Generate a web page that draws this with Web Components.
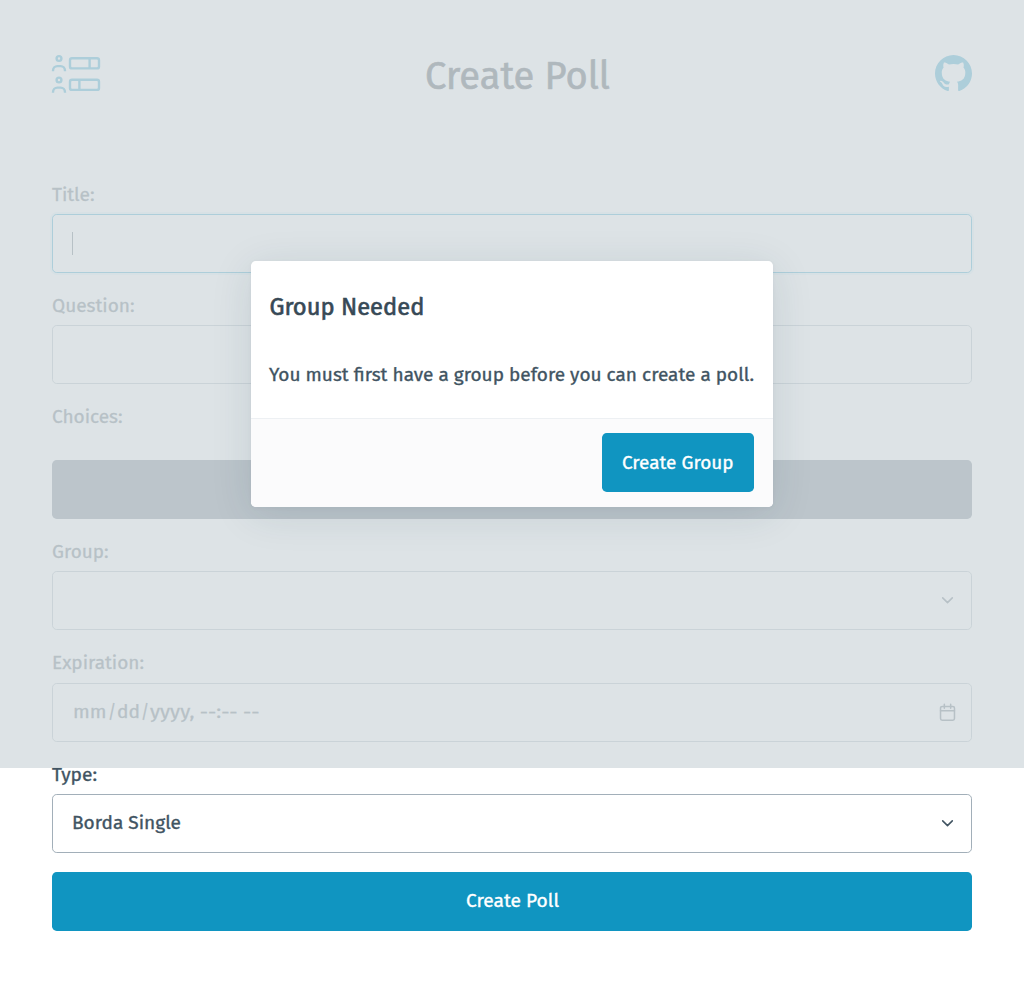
<!DOCTYPE html>
<html lang="en">
<head>
<meta charset="utf-8">
<title>Create Poll</title>
<style>
  html, body { margin: 0; background: #fff; }
  body { font: 400 19px/28.5px "Fira Sans", "Noto Sans", sans-serif; color: #415462; height: 988px; overflow: hidden; position: relative; -webkit-text-stroke: .35px currentColor; }
</style>
</head>
<body>
<poll-page></poll-page>
<script>
const define = (name, html, setup) => customElements.define(name, class extends HTMLElement {
  connectedCallback() {
    if (this.shadowRoot) return;
    const t = document.createElement('template');
    t.innerHTML = html;
    this.attachShadow({ mode: 'open' }).append(t.content.cloneNode(true));
    if (setup) setup(this, this.shadowRoot);
  }
});

/* A single line of text fitted to a fixed measure. */
define('fit-text', `<style>
  :host { display: inline-block; white-space: pre; -webkit-text-stroke-color: currentColor; }
  span { display: inline-block; transform-origin: 0 50%; }
</style><span><slot></slot></span>`, (el, root) => {
  const w = parseFloat(el.getAttribute('measure'));
  const span = root.querySelector('span');
  el.style.width = w + 'px';
  span.style.transform = `scaleX(${w / span.getBoundingClientRect().width})`;
});

define('poll-logo', `<style>:host{display:block;width:50px;height:40px;color:#1095c1}svg{display:block}</style>
<svg width="50" height="40" viewBox="51 54 50 40" fill="none" stroke="currentColor" stroke-width="2.4">
  <circle cx="59" cy="58.5" r="2.4"/><path d="M53 71.3v-.6c0-2.8 2-4.6 4.4-4.6h3.2c2.4 0 4.4 1.8 4.4 4.6v.6"/>
  <rect x="70" y="58.3" width="29" height="10.1" rx="2"/><path d="M89.6 58.3v10.1"/>
  <circle cx="59" cy="80" r="2.4"/><path d="M53 92.8v-.6c0-2.8 2-4.6 4.4-4.6h3.2c2.4 0 4.4 1.8 4.4 4.6v.6"/>
  <rect x="70" y="79.8" width="29" height="10.1" rx="2"/><path d="M79.4 79.8v10.1"/>
</svg>`);

define('github-mark', `<style>:host{display:block;color:#1095c1}svg{display:block}</style>
<svg width="37" height="37" viewBox="0 0 16 16" fill="currentColor"><path d="M8 0C3.58 0 0 3.58 0 8c0 3.54 2.29 6.53 5.47 7.59.4.07.55-.17.55-.38 0-.19-.01-.82-.01-1.49-2.01.37-2.53-.49-2.69-.94-.09-.23-.48-.94-.82-1.13-.28-.15-.68-.52-.01-.53.63-.01 1.08.58 1.23.82.72 1.21 1.87.87 2.33.66.07-.52.28-.87.51-1.07-1.78-.2-3.64-.89-3.64-3.95 0-.87.31-1.59.82-2.15-.08-.2-.36-1.02.08-2.12 0 0 .67-.21 2.2.82.64-.18 1.32-.27 2-.27s1.36.09 2 .27c1.53-1.04 2.2-.82 2.2-.82.44 1.1.16 1.92.08 2.12.51.56.82 1.27.82 2.15 0 3.07-1.87 3.75-3.65 3.95.29.25.54.73.54 1.48 0 1.07-.01 1.93-.01 2.2 0 .21.15.46.55.38A8.01 8.01 0 0 0 16 8c0-4.42-3.58-8-8-8z"/></svg>`);

define('page-header', `<style>
  :host { display: flex; justify-content: space-between; align-items: flex-start; height: 126.75px; padding: 54px 0 0; margin-left: -1px; }
  h1 { margin: -2px 0 0; padding-right: 2px; font-size: 38px; line-height: 48px; font-weight: 400; -webkit-text-stroke-width: .7px; color: #1b2832; }
  github-mark { margin-top: 1px; }
</style><poll-logo></poll-logo><h1><fit-text measure="185">Create Poll</fit-text></h1><github-mark></github-mark>`);

define('form-field', `<style>
  :host { display: block; height: 111.25px; }
  .label { height: 33.25px; }
  .box { box-sizing: border-box; height: 59px; border: 1px solid #a2afb9; border-radius: 4.75px; background: #fff; display: flex; align-items: center; justify-content: space-between; padding: 0 14px 0 19px; }
  :host([focused]) .box { border-color: #1095c1; box-shadow: 0 0 0 2px rgba(16,149,193,.125); }
  .caret { width: 1px; height: 23px; background: #415462; }
  .spacer { flex: 1; }
</style><div class="label"><slot name="label"></slot></div><div class="box"><slot></slot><i class="spacer"></i></div>`, (el, root) => {
  const box = root.querySelector('.box');
  const icons = {
    chevron: '<path d="m5.2 7.6 5.3 5.2 5.3-5.2"/>',
    calendar: '<rect x="2.8" y="3.8" width="15.4" height="15.2" rx="1.8"/><path d="M7 1.5v4.3M14 1.5v4.3M2.8 8.6h15.4"/>'
  };
  const icon = el.getAttribute('icon');
  if (el.hasAttribute('focused')) box.insertAdjacentHTML('afterbegin', '<i class="caret"></i>');
  if (icon) box.insertAdjacentHTML('beforeend', `<svg width="19" height="19" viewBox="0 0 21 21" fill="none" stroke="#415462" stroke-width="1.7" stroke-linecap="round" stroke-linejoin="round">${icons[icon]}</svg>`);
});

define('poll-button', `<style>
  :host { display: block; }
  button { all: unset; box-sizing: border-box; display: flex; justify-content: center; width: 100%; height: 59px; padding-top: 15px; border-radius: 4.75px; background: #1095c1; color: #fff; -webkit-text-stroke: .35px #fff; }
  :host([secondary]) button { background: #596b78; }
</style><button><slot></slot></button>`);

define('poll-modal', `<style>
  :host { position: absolute; inset: 0 0 auto; height: 768px; display: flex; align-items: center; justify-content: center; background: rgba(213,220,224,.8); }
  article { width: 522px; height: 246px; border-radius: 4.75px; background: #fff; overflow: hidden; display: flex; flex-direction: column; box-shadow: 0 7px 42px rgba(27,56,70,.12), 0 1px 5px rgba(27,56,70,.04); }
  main { flex: 1; padding: 31px 19px 0; }
  h3 { margin: 0 0 38.6px; font-size: 23.75px; line-height: 30px; font-weight: 400; -webkit-text-stroke-width: .6px; color: #374956; }
  p { margin: 0; }
  h3 fit-text, p fit-text { margin-left: -.6px; }
  footer { box-sizing: border-box; height: 89px; border-top: 1px solid #edf0f3; background: #fbfbfc; display: flex; justify-content: flex-end; padding: 14px 19px 0; }
  poll-button { width: 152px; }
  poll-button fit-text { margin-top: .8px; }
</style><article><main><h3><fit-text measure="155">Group Needed</fit-text></h3>
<p><fit-text measure="485">You must first have a group before you can create a poll.</fit-text></p></main>
<footer><poll-button><fit-text measure="111.5">Create Group</fit-text></poll-button></footer></article>`);

define('poll-page', `<style>
  :host { display: block; padding: 0 52px; }
  .choices { height: 134.75px; }
  .choices div { height: 57px; }
</style>
<page-header></page-header>
<form-field focused><fit-text slot="label" measure="42.5">Title:</fit-text></form-field>
<form-field><fit-text slot="label" measure="82.5">Question:</fit-text></form-field>
<div class="choices"><div><fit-text measure="70.5">Choices:</fit-text></div><poll-button secondary></poll-button></div>
<form-field icon="chevron"><fit-text slot="label" measure="56.5">Group:</fit-text></form-field>
<form-field icon="calendar"><fit-text slot="label" measure="92">Expiration:</fit-text><fit-text measure="33.5" style="margin-left:1px">mm</fit-text><fit-text measure="8" style="margin:0 1px">/</fit-text><fit-text measure="23">dd</fit-text><fit-text measure="8" style="margin:0 1.5px 0 1px">/</fit-text><fit-text measure="109.5">yyyy, --:-- --</fit-text></form-field>
<form-field icon="chevron"><fit-text slot="label" measure="45">Type:</fit-text><fit-text measure="109">Borda Single</fit-text></form-field>
<poll-button><fit-text measure="93">Create Poll</fit-text></poll-button>
<poll-modal></poll-modal>`);
</script>
</body>
</html>
